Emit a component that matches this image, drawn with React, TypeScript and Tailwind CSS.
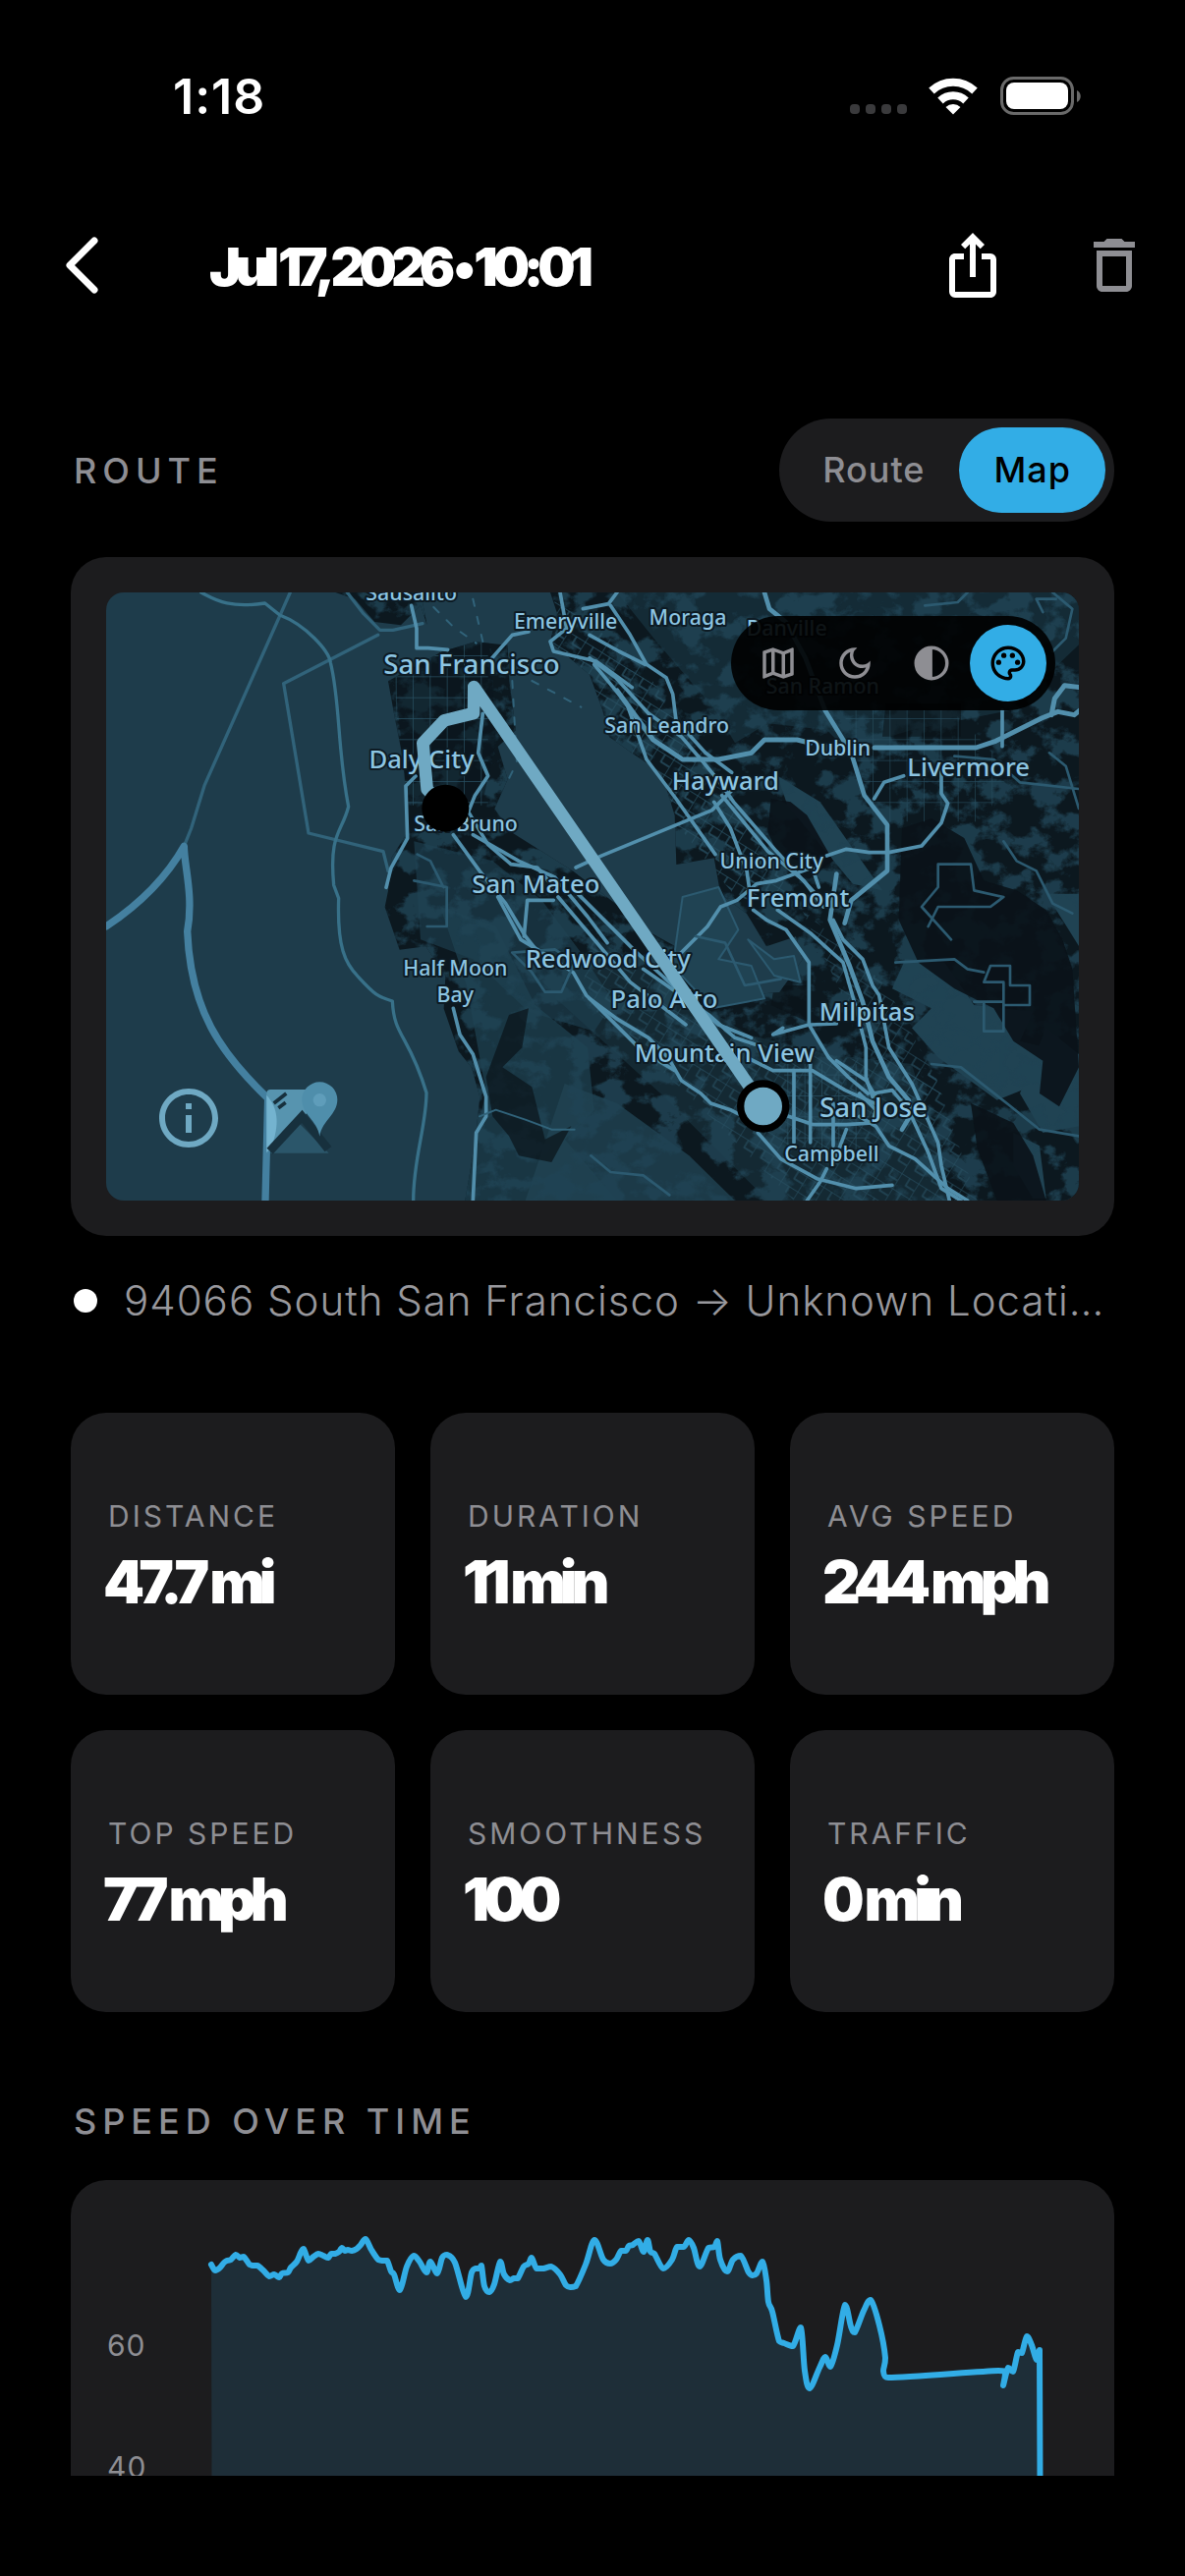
import React from 'react';
import {
  MdDeleteOutline,
  MdInfoOutline,
  MdIosShare,
  MdOutlineDarkMode,
  MdOutlineMap,
  MdOutlinePalette,
} from 'react-icons/md';

const stats = [
  { label: 'DISTANCE', value: '47.7 mi' },
  { label: 'DURATION', value: '11 min' },
  { label: 'AVG SPEED', value: '244 mph' },
  { label: 'TOP SPEED', value: '77 mph' },
  { label: 'SMOOTHNESS', value: '100' },
  { label: 'TRAFFIC', value: '0 min' },
];

// x, baseline, size, text (map units)
const places: [number, number, number, string][] = [
  [932, 25, 64, 'Sausalito'],
  [1403, 112, 64, 'Emeryville'],
  [1776, 98, 64, 'Moraga'],
  [2078, 132, 64, 'Danville'],
  [2188, 309, 64, 'San Ramon'],
  [1116, 248, 83, 'San Francisco'],
  [963, 538, 77, 'Daly City'],
  [1098, 729, 64, 'San Bruno'],
  [1312, 917, 77, 'San Mateo'],
  [1712, 430, 64, 'San Leandro'],
  [1891, 602, 77, 'Hayward'],
  [2234, 498, 64, 'Dublin'],
  [2633, 560, 77, 'Livermore'],
  [2032, 842, 64, 'Union City'],
  [2112, 960, 77, 'Fremont'],
  [1066, 1169, 64, 'Half Moon'],
  [1066, 1252, 64, 'Bay'],
  [1532, 1147, 77, 'Redwood City'],
  [1704, 1269, 77, 'Palo Alto'],
  [2323, 1307, 77, 'Milpitas'],
  [1888, 1434, 77, 'Mountain View'],
  [2343, 1603, 83, 'San Jose'],
  [2215, 1737, 64, 'Campbell'],
];

const speed: [number, number][] = [
  [107, 50], [111, 56], [116, 53], [120, 48], [123, 46], [127, 45], [132, 40], [136, 43], [140, 42], [146, 50], [150, 51],
  [154, 51], [160, 56], [166, 62], [171, 60], [176, 63], [179, 59], [185, 58], [188, 53], [194, 47], [198, 38], [201, 34],
  [206, 46], [211, 42], [216, 39], [221, 41], [226, 43], [229, 39], [233, 39], [237, 37], [240, 33], [243, 36], [246, 35],
  [250, 36], [255, 34], [259, 30], [264, 24], [270, 35], [277, 45], [282, 46], [286, 46], [290, 57], [293, 60], [299, 76],
  [306, 52], [313, 41], [319, 47], [326, 58], [330, 47], [337, 59], [342, 43], [347, 40], [355, 48], [366, 83], [372, 58],
  [376, 54], [380, 54], [382, 51], [385, 72], [390, 78], [395, 70], [401, 47], [405, 60], [411, 66], [415, 64], [419, 64],
  [425, 52], [430, 49], [433, 43], [438, 54], [445, 54], [453, 52], [462, 60], [468, 71], [473, 73], [478, 72], [488, 50],
  [497, 25], [506, 45], [513, 49], [519, 45], [524, 36], [529, 36], [532, 31], [536, 30], [542, 26], [547, 37], [551, 25],
  [554, 37], [558, 39], [567, 54], [576, 45], [581, 32], [588, 32], [593, 25], [598, 33], [604, 52], [613, 33], [619, 32],
  [622, 26], [625, 45], [632, 57], [638, 45], [646, 41], [654, 58], [658, 61], [662, 59], [668, 47], [672, 66], [674, 88],
  [678, 98], [685, 128], [690, 130], [699, 133], [707, 114], [711, 158], [716, 176], [726, 155], [732, 144], [737, 154],
  [744, 132], [752, 91], [758, 113], [762, 119], [771, 97], [778, 86], [787, 112], [793, 145], [791, 158], [796, 165],
  [908, 158], [915, 161], [913, 173], [918, 155], [923, 159], [928, 139], [932, 140], [937, 123], [942, 132], [947, 147],
  [950, 137], [951, 504],
];

const clamp = (v: number, a: number, b: number) => Math.max(Math.min(a, b), Math.min(Math.max(a, b), v));

// smooth line through the points, never overshooting a segment
function curve(pts: [number, number][]) {
  let d = `M${pts[0][0]} ${pts[0][1]}`;
  for (let i = 0; i < pts.length - 1; i++) {
    const p0 = pts[Math.max(i - 1, 0)];
    const p1 = pts[i];
    const p2 = pts[i + 1];
    const p3 = pts[Math.min(i + 2, pts.length - 1)];
    const c1x = clamp(p1[0] + (p2[0] - p0[0]) / 6, p1[0], p2[0]);
    const c1y = clamp(p1[1] + (p2[1] - p0[1]) / 6, p1[1], p2[1]);
    const c2x = clamp(p2[0] - (p3[0] - p1[0]) / 6, p1[0], p2[0]);
    const c2y = clamp(p2[1] - (p3[1] - p1[1]) / 6, p1[1], p2[1]);
    d += `C${c1x} ${c1y} ${c2x} ${c2y} ${p2[0]} ${p2[1]}`;
  }
  return d;
}

function StatusBar() {
  return (
    <div className="flex h-[186px] shrink-0 items-start justify-between pt-[68px] pr-[106px] pl-44">
      <span className="text-[50px] leading-[60px] font-semibold tracking-[1px]">1:18</span>
      <svg viewBox="0 0 236 40" className="mt-[9px] h-10 w-[236px]" fill="none">
        <g fill="#3a3a3c">
          <rect x="1" y="29" width="10" height="10" rx="4" />
          <rect x="17" y="29" width="10" height="10" rx="4" />
          <rect x="33" y="29" width="10" height="10" rx="4" />
          <rect x="49" y="29" width="10" height="10" rx="4" />
        </g>
        <path d="M84 15.500a32 32 0 0 1 44 0M93 25.500a19 19 0 0 1 26 0" stroke="#fff" strokeWidth="8" />
        <path d="M98.500 32a11 11 0 0 1 15 0l-7.500 7.500z" fill="#fff" />
        <rect x="155.500" y="2.500" width="72" height="36" rx="12" stroke="#6a6a6a" strokeWidth="3" />
        <rect x="160" y="7" width="63" height="27" rx="8" fill="#fff" />
        <path d="M232 15c5 2 5 10 0 12z" fill="#6a6a6a" />
      </svg>
    </div>
  );
}

function Header() {
  return (
    <header className="flex h-[168px] shrink-0 items-center pr-9 pl-12">
      <button aria-label="Back" className="size-[72px]">
        <svg viewBox="0 0 72 72" className="size-full" fill="none" stroke="#fff" strokeWidth="7" strokeLinecap="round" strokeLinejoin="round">
          <path d="M48 11L23 36l25 25" />
        </svg>
      </button>
      <h1 className="ml-[93px] flex-1 pt-[3px] text-[54px] leading-[66px] font-black tracking-[-6px] whitespace-nowrap">
        Jul 17, 2026 • 10:01
      </h1>
      <div className="flex gap-[72px]">
        <button aria-label="Share"><MdIosShare className="size-[72px]" /></button>
        <button aria-label="Delete" className="text-[#8e8e93]"><MdDeleteOutline className="size-[72px]" /></button>
      </div>
    </header>
  );
}

function TileMap() {
  return (
    <svg viewBox="0 0 2970 1857" className="block h-auto w-full" fill="none" strokeLinejoin="round" strokeLinecap="round">
      <defs>
        <clipPath id="land">
          <path d="M861 271l20 110 20 100 10 80 5 90 5 80-50 80-10 100-10 50 45 130 80-10 60 90-5 100 45 130 40 50 25 90-15 140-30 176H2970V0H1356l20 61-20 90 120 100 40 110 20 80 70 50 90 60 40 130 5 150 115-20 20 110 80 60 60 100 90-30 20 70-70 100-120 10-70-80-200-110-110-90-130-100-190-120-50-70 40-90-30-100 55-50-20-150-5-110-100-10-100 30z" />
          <path d="M700 0l60 20 60 70 80 10 60-60 20 60-20-100z" />
        </clipPath>
        <filter id="hills" x="0" y="0" width="100%" height="100%" colorInterpolationFilters="sRGB">
          <feTurbulence type="fractalNoise" baseFrequency="0.012 0.014" numOctaves="5" seed="11" />
          <feColorMatrix values="0 0 0 0 0.125  0 0 0 0 0.263  0 0 0 0 0.329  7 0 0 0 -3.300" />
        </filter>
        <pattern id="streets" width="60" height="54" patternUnits="userSpaceOnUse" patternTransform="rotate(32)">
          <path d="M0 0H60M0 0V54M30 0V27H60" stroke="#285062" strokeWidth="4" />
        </pattern>
        <pattern id="blocks" width="52" height="64" patternUnits="userSpaceOnUse">
          <path d="M0 0H52M0 0V64" stroke="#285062" strokeWidth="4" />
        </pattern>
      </defs>
      <rect width="2970" height="1857" fill="#1e3c4b" />
      <g clipPath="url(#land)">
        <rect width="2970" height="1857" fill="#0c181f" />
        {/* parks and foothills */}
        <g fill="#204353">
          <path d="M2970 0H1560l120 150 180 210 60 100 100-60 180 20 60 60 200-60 300-60 210-200z" opacity=".45" />
          <path d="M940 760l240 60 150 120 120 160 100 150-60 90-200-60-170-160-160-60z" opacity=".6" />
          <path d="M1020 960l170 60 120 240 160 130 20 190-90 90 160 187h-480l80-330-60-330z" opacity=".7" />
          <path d="M1400 1500l160 60 220 160 140 137h-640z" opacity=".8" />
          <path d="M2050 560l130 80 190 270-90-20-200-240z" />
          <path d="M2440 1120l120 10 90 130 180 20-40 90 120 30-40 90-150 60-180-130-80-90 60-60-120-60z" />
          <path d="M2870 1330l100 80v220l-110 20-70-120z" />
          <path d="M2770 1650l80 40 20 160h-40l-60-100z" />
          <path d="M2870 920l100 160v-160z" />
          <path d="M1500 1060l460 290 240 60 260 30 120 417h-560l-320-320-330-300z" opacity=".4" />
        </g>
        <rect width="2970" height="1857" filter="url(#hills)" opacity=".85" />
        <g fill="#0a1218">
          <path d="M2030 630l60 10 50 40 40 70 40 70-30 20-20 20-50-40-70-20-30-70z" opacity=".9" />
          <path d="M2430 720l90-30 100 60 60 130 100 30 90 60 50 90 30 90 20 300-60 120-60-40 10-100-90-60-60-100-120-60-110-80-60-130z" opacity=".9" />
          <path d="M2640 1560l130 60 60 100 40 137h-150l-60-160z" opacity=".9" />
          <path d="M1230 1290l60-20-20 120-60 60 90 60 40 160 80-40-60 110-100-20-30-60-50-60-20-120z" opacity=".7" />
          <path d="M2380 340h230v100h-240z" opacity=".6" />
          <path d="M2040 1200h110l-10 110-110-50z" opacity=".7" />
        </g>
        <path d="M870 150h300l20 300-40 190H920z" fill="#0b161d" opacity=".55" />
        <path d="M876 150h290v500H900z" fill="url(#blocks)" />
        <path d="M1370 20l250 180 290 420 180 300-160 20-420-520-160-220z" fill="url(#streets)" />
        <path d="M2250 360h330l180 180-80 160h-330z" fill="url(#blocks)" opacity=".8" />
        <path d="M1480 1060l460 290 260 60 330 60 130 387h-560l-320-320-330-300z" fill="url(#streets)" opacity=".8" />
        <path d="M2070 1440h260v260h-260z" fill="url(#blocks)" />
        <path d="M2120 960l260 240 180 330-160 20-200-420z" fill="url(#streets)" opacity=".8" />
      </g>
      {/* south bay water and salt ponds */}
      <path d="M1760 930l110-30 60 130-60 90 100 20 40 100-160 30-120-130z" fill="#204353" stroke="#2c5a70" strokeWidth="6" />
      <path d="M1960 1060l80 60 60-10 20 80-80-20z" fill="#204353" stroke="#2c5a70" strokeWidth="6" />

      {/* maritime boundaries */}
      <g stroke="#31637a" strokeWidth="10">
        <path d="M562 0L300 590 260 720 240 770" />
        <path d="M830 130L542 278 618 735 846 791l15 60" />
        <path d="M736 0l50 65 50 50 40 0 90-20" />
        <path d="M1120 20l30 130M1000 45l60 60 70 50M1240 270l14 250-30 60M1300 270l150 80" strokeDasharray="22 34" strokeWidth="6" />
      </g>
      <path d="M290 0c40 20 80 50 195 33l45 36c80 30 150 110 155 145 30 120 20 260 55 440-20 80-60 80-45 240l15 40c-5 150 20 200 60 240 50 55 60 60 104 74 5 110 50 100 104 280 0 100-40 200-40 329" stroke="#387189" strokeWidth="10" />
      <path d="M0 1020c120-80 190-160 238-245 0 60 30 150 10 260 10 240 100 370 246 510l-8 312" stroke="#4480a0" strokeWidth="22" />

      {/* highways */}
      <g stroke="#528fac" strokeWidth="11">
        <path d="M932 40l16 70 0 60 35 0 60 5M1170 210l70-80 50-10M1150 370l-14 120 30 70-40 60-20 50 60 100 70 60 80 10 50 60M945 561l-30 30 5 160-50 90-15 60" />
        <path d="M1060 740l80 110 80 100 60 100 40 50M1120 740l140 80 110 50 100 120 60 80" />
        <path d="M1196 930l70 130 100 60 60 40 40 70 110 110 60 60 100 60M1366 940l-80 0-10 110M1380 930l220 260 170 130M1440 920l180 180 110 100 140 120 100 40" />
        <path d="M1560 0l-26 35-78 15M1386 0l20 110-50 40 10 30 130 30 110 80M1476 130l90 50 80 40" />
        <path d="M1540 40l60 90 50 90 60 40 20 50 10 80 90 100 80 60" />
        <path d="M1476 200l80 60 100 110 100 70 60 70 50 60 50 70 130 150 120 130" />
        <path d="M1490 220l100 120 60 170 90 120 120 170" />
        <path d="M1560 300l110 150 90 60 110 0 100-20 40-40 100 0 40 10M2346 474h230l80 0 60-20 140-70 50-20 50 10 60-50-10-30-80-10-30 40-10 50" strokeWidth="15" />
        <path d="M2010 0l15 50 50 40 60 110 60 160 80 130 40 130 70 90 0 140-110 90-20 70" strokeWidth="14" />
        <path d="M1510 805l340-140 60-60M1510 805l-76 35" />
        <path d="M1856 640l50 80 50 130 10 70M1880 620l140 170 110 90 60 80M2200 804l60-20 70 10 60 0 100-20 60-70 20-60-20-30v-90M2345 630l30-50 60-20M2736 470v-110" />
        <path d="M1756 1100l80-80 40-60 50-20 60-50 60-10 110-40 20 60" />
        <path d="M1976 970l40 30 60 30 70 100 0 190-110 30 30-20M2050 970l100 70 100 90 40 140 30 120 0 90 20 60" />
        <path d="M2230 860l-20 140 60 140 40 110 30 120 50 110 60 70 10 40-30 50" strokeWidth="14" />
        <path d="M2220 1000l30 60 60 60 30 80 20 30 30 160 70 110 80 180 10 70 30 130 50 70" />
        <path d="M2146 1320l60 100 60 60 60 50M2150 1320l80-3M1640 1150l200 140 80 70 60 20M1956 1420l80 40 120 0 100 60 90 40M1476 1240l80 60 100 60 60 60 40 70 60 40 30 30 60 20 40 20" />
        <path d="M1990 1650l70 80 110 60 120 30 110-10M2300 1530l50 50-10 40-80 5-100 0-90-30M2260 1640l-30 80M2200 1760l-20 40-40 57M2300 1600l50 30 40 60 80 40 100 90 60 37M2150 1440l0 240M2220 1560v130M2100 1460v220" />
        <path d="M2340 1530l60-10 50 60 60 130 40 110 60 37M2230 1430l90 60 30 50" />
        <path d="M1060 1270l20 80 40 60 40 130 0 60-30 50-10 207" />
        <path d="M1140 1600l50-20 90 30 80 30 70 0" strokeWidth="6" stroke="#31637a" />
      </g>
      <g stroke="#2c5a70" strokeWidth="8">
        <path d="M2500 40l100-10 30-30M2860 60l-20-40 60 0M2890 0l60 50-20 90-40 40M2580 1060l-90-100 50-60 0-70 100 0 10 80 90 20-40 30-160 0-30 60M2880 490l50 40 40 130M2590 500l120 10 80 70 180 20M2700 1140h60v60h60v60h-80v-70h-60zM2410 1130l180-10 40 30 50 10M2650 1250h90v90h-60v-90M1800 1050l90 20 60 130 110-20M2520 1440l90 10 140 110 100 80 120 20" />
        <path d="M1240 1100l60 60 40 60 50 0 40-90-60-40zM940 880l100 20 0 120-60 0M950 800l40 20 40 80M1480 1720l60 50 100 10 80 60M2740 760l40 60 60 30 50 100 60 30" />
      </g>

      {places.map(([x, y, size, name]) => (
        <text
          key={name}
          x={x}
          y={y}
          fontSize={size}
          fontWeight="500"
          textAnchor="middle"
          fill="#8cc5e2"
          stroke="#0d1b24"
          strokeWidth="12"
          paintOrder="stroke"
          className="font-['Noto_Sans',sans-serif]"
        >
          {name}
        </text>
      ))}

      {/* trip line */}
      <path d="M1036 659L980 601 967 460l65-69 90-22 1-81 883 1281" stroke="#6fa9c3" strokeWidth="38" />
      <circle cx="1036" cy="659" r="72" fill="#000" />
      <circle cx="2006" cy="1569" r="69" fill="#6fa9c3" stroke="#000" strokeWidth="22" />

      {/* maps provider logo */}
      <path d="M490 1530q0-12 12-12h170l-66 80-116 114z" fill="#5794af" />
      <path d="M490 1535c36 40 40 90 14 160l-14 14z" fill="#74b3cf" />
      <path d="M500 1712l88-92 92 92z" fill="#2b566a" />
      <path d="M500 1706L598 1600l80 100" stroke="#17303d" strokeWidth="26" strokeLinecap="butt" strokeLinejoin="miter" />
      <path d="M512 1560l38-30M526 1574l22-16" stroke="#17303d" strokeWidth="11" strokeLinecap="butt" />
      <path d="M652 1661c-8-50-54-66-54-112a54 54 0 0 1 108 0c0 46-46 62-54 112z" fill="#4f8eab" />
      <circle cx="652" cy="1550" r="20" fill="#5f9dba" />
    </svg>
  );
}

function MapStyles() {
  return (
    <div className="absolute top-6 right-6 flex rounded-full bg-black/90 p-[9px] text-[#8e8e93]">
      <button aria-label="Standard" className="flex size-[78px] items-center justify-center"><MdOutlineMap className="size-[42px]" /></button>
      <button aria-label="Dark" className="flex size-[78px] items-center justify-center"><MdOutlineDarkMode className="size-[42px]" /></button>
      <button aria-label="Contrast" className="flex size-[78px] items-center justify-center">
        <svg viewBox="0 0 24 24" className="size-[42px]">
          <circle cx="12" cy="12" r="9" fill="none" stroke="currentColor" strokeWidth="2" />
          <path d="M12.500 2.500v19H12a9.500 9.500 0 0 1 0-19z" fill="currentColor" />
        </svg>
      </button>
      <button aria-label="Tinted" className="flex size-[78px] items-center justify-center rounded-full bg-[#32ade6] text-black">
        <MdOutlinePalette className="size-[42px]" />
      </button>
    </div>
  );
}

function SpeedChart() {
  const line = curve(speed);

  return (
    <svg viewBox="0 0 990 520" className="block h-auto w-full" fill="none">
      <g fill="#8e8e93" fontSize="30" letterSpacing="1">
        <text x="1" y="143">60</text>
        <text x="1" y="267">40</text>
        <text x="1" y="391">20</text>
        <text x="1" y="515">0</text>
      </g>
      <path d={`${line}L108 504Z`} fill="#32ade6" fillOpacity=".13" />
      <path d={line} stroke="#32ade6" strokeWidth="6" strokeLinejoin="round" strokeLinecap="round" />
    </svg>
  );
}

export default function App() {
  return (
    <div className="flex h-screen flex-col overflow-hidden bg-black font-['Inter',sans-serif] text-white">
      <StatusBar />
      <Header />

      <main className="mb-[102px] min-h-0 flex-1 overflow-y-auto px-[72px] pt-[72px] [scrollbar-width:none]">
        {/* Route */}
        <div className="flex items-center justify-between">
          <h2 className="pl-[3px] text-[36px] leading-[48px] font-medium tracking-[6px] text-[#8e8e93]">ROUTE</h2>
          <div className="flex rounded-full bg-[#1c1c1e] p-[9px] text-[36px] leading-[45px] font-medium tracking-[1px]">
            <button className="rounded-full px-[35px] py-[21px] text-[#8e8e93]">Route</button>
            <button className="rounded-full bg-[#32ade6] px-[35px] py-[21px] text-black">Map</button>
          </div>
        </div>

        <div className="mt-9 rounded-[36px] bg-[#1c1c1e] p-9">
          <div className="relative overflow-hidden rounded-[18px]">
            <TileMap />
            <MapStyles />
            <button aria-label="Map attribution" className="absolute bottom-12 left-12 text-[#6fa9c3]">
              <MdInfoOutline className="size-[72px]" />
            </button>
          </div>
        </div>

        <div className="mt-9 flex items-center gap-[27px] pl-[3px]">
          <span className="size-6 shrink-0 rounded-full bg-white" />
          <p className="truncate text-[42px] leading-[60px] font-light tracking-[1px] text-[#98989d]">
            94066 South San Francisco → Unknown Location
          </p>
        </div>

        {/* Stats */}
        <div className="mt-[84px] grid grid-cols-3 gap-9">
          {stats.map((s) => (
            <div key={s.label} className="flex h-[287px] flex-col justify-center rounded-[36px] bg-[#1c1c1e] px-[33px]">
              <div className="pl-[5px] text-[30px] leading-[56px] tracking-[3px] text-[#8e8e93]">{s.label}</div>
              <div className="text-[60px] leading-[78px] font-black tracking-[-6px] whitespace-nowrap">{s.value}</div>
            </div>
          ))}
        </div>

        {/* Speed */}
        <h2 className="mt-[87px] pl-[3px] text-[36px] leading-[48px] font-medium tracking-[6px] text-[#8e8e93]">SPEED OVER TIME</h2>
        <div className="mt-9 rounded-[36px] bg-[#1c1c1e] p-9">
          <SpeedChart />
        </div>
      </main>
    </div>
  );
}
